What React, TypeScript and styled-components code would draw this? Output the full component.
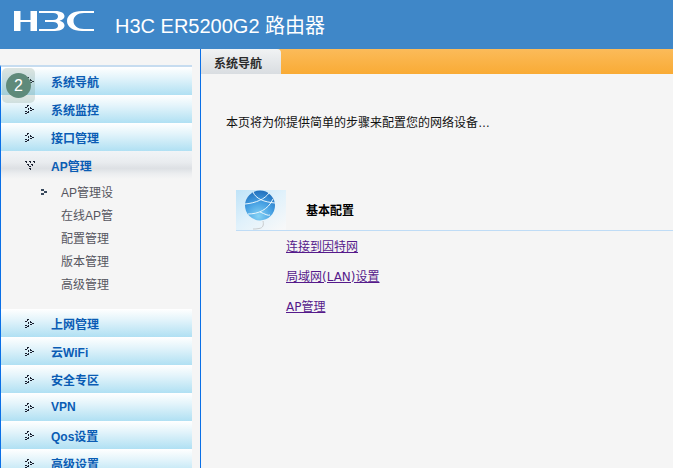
import React from "react";
import styled, { createGlobalStyle } from "styled-components";

const Global = createGlobalStyle`
  html, body { margin: 0; padding: 0; height: 468px; overflow: hidden; background: #f5f5f5; }
  #root { height: 468px; }
  * { box-sizing: border-box; }
`;

const FONT = `"Liberation Sans", "Noto Sans CJK SC", sans-serif`;

const Page = styled.div`
  position: relative;
  width: 673px;
  height: 468px;
  overflow: hidden;
  font-family: ${FONT};
  font-size: 12px;
  display: flex;
  flex-direction: column;
`;
const Header = styled.header`
  height: 49px;
  flex: none;
  background: #3f87c8;
  display: flex;
  align-items: center;
  padding: 0 0 0 14px;
`;
const LogoMark = styled.svg`
  width: 80px;
  height: 20px;
  flex: none;
  margin-bottom: 7px;
`;
const Title = styled.h1`
  margin: 2px 0 0 21px;
  font-size: 20px;
  line-height: 26px;
  font-weight: 400;
  color: #fff;
  white-space: nowrap;
`;
const Body = styled.div`
  flex: 1;
  display: flex;
  min-height: 0;
`;
const Sidebar = styled.nav`
  width: 201px;
  flex: none;
  padding-top: 16px;
  border-right: 1px solid #0a6fe6;
  background: #f5f5f5;
`;
const Menu = styled.div`
  width: 192px;
  height: 500px;
  border-left: 1px solid #0a6fe6;
  border-top: 2px solid #c6dcf0;
`;
const Row = styled.div<{ $open?: boolean }>`
  height: 28px;
  display: flex;
  align-items: center;
  padding-left: 24px;
  font-weight: 700;
  color: #0a5cb4;
  background: ${(p) =>
    p.$open
      ? "linear-gradient(#f1f4f7 0%, #e9ecef 40%, #dde0e4 62%, #eceef0 82%, #f5f5f5 100%)"
      : "linear-gradient(#ffffff 0%, #e6f5fb 35%, #b0e0f3 100%)"};
`;
const RowIcon = styled.svg`
  width: 11px;
  height: 9px;
  flex: none;
  margin-right: 15px;
`;
const Sub = styled.div`
  margin: 1px 0 14px;
`;
const SubRow = styled.div`
  height: 23px;
  display: flex;
  align-items: center;
  padding-left: 40px;
  color: #55555f;
`;
const SubMarker = styled.svg`
  width: 6px;
  height: 6px;
  flex: none;
  margin-right: 14px;
`;
const SubText = styled.span<{ $plain?: boolean }>`
  margin-left: ${(p) => (p.$plain ? "20px" : "0")};
`;
const Main = styled.main`
  flex: 1;
  min-width: 0;
  background: #f5f5f5;
`;
const TabBar = styled.div`
  height: 25px;
  background: linear-gradient(#fbbb5a, #f9ab35);
`;
const Tab = styled.div`
  width: 80px;
  height: 25px;
  padding: 2px 0 0 13px;
  display: flex;
  align-items: center;
  font-weight: 700;
  color: #2a2a2a;
  border-top-right-radius: 4px;
  background: linear-gradient(#f1f3f4, #d9dde1);
`;
const Intro = styled.p`
  margin: 41px 0 0 25px;
  line-height: 16px;
  color: #111;
`;
const SectionHead = styled.div`
  margin: 59px 0 0 35px;
  height: 41px;
  display: flex;
  align-items: center;
  border-bottom: 1px solid #bfdcf6;
`;
const Globe = styled.svg`
  width: 50px;
  height: 40px;
  flex: none;
`;
const SectionTitle = styled.h2`
  margin: 0 0 2px 20px;
  font-size: 12px;
  font-weight: 700;
  color: #000;
`;
const Links = styled.div`
  margin: 8px 0 0 85px;
  display: flex;
  flex-direction: column;
  align-items: flex-start;
`;
const LinkItem = styled.a`
  height: 30px;
  line-height: 16px;
  color: #551a8b;
  text-decoration: underline;
  font-family: "DejaVu Sans", "Noto Sans CJK SC", sans-serif;
`;
const Badge = styled.div`
  position: absolute;
  left: 2px;
  top: 68px;
  width: 33px;
  height: 35px;
  border-radius: 5px;
  background: rgba(110, 140, 125, 0.22);
  display: flex;
  align-items: center;
  justify-content: center;
`;
const BadgeDot = styled.div`
  width: 25px;
  height: 25px;
  border-radius: 50%;
  background: #5f8a7a;
  color: #fff;
  font-size: 16px;
  line-height: 25px;
  text-align: center;
  font-family: "Liberation Sans", sans-serif;
`;

const Logo = () => (
  <LogoMark viewBox="0 0 80 20" aria-label="H3C logo">
    <g fill="#fff">
      <rect x="0" y="0" width="6.5" height="20" />
      <rect x="16.5" y="0" width="6.5" height="20" />
      <rect x="0" y="9" width="23" height="2" />
      <path d="M25 0 H41 C47.5 0 50.5 2.5 50.5 5.2 C50.5 7.4 48.5 9 45.5 9.8 C48.5 10.6 50.5 12.2 50.5 14.6 C50.5 17.5 47.5 20 41 20 H25 V18 H39 C42.5 18 44 16.6 44 14.7 C44 12.6 42.5 10.9 39 10.9 H31 V9 H39 C42.5 9 44 7.4 44 5.3 C44 3.4 42.5 2 39 2 H25 Z" />
      <path d="M80 0 H68 C59 0 53 4 53 10 C53 16 59 20 68 20 H80 V18 H70 C63.5 18 59.5 14.5 59.5 10 C59.5 5.5 63.5 2 70 2 H80 Z" />
    </g>
  </LogoMark>
);

const closedPixels = [
  [2, 0], [3, 0], [2, 1],
  [0, 2], [1, 2], [5, 2], [5, 3], [6, 3],
  [3, 3], [3, 4], [7, 4], [8, 4],
  [5, 5], [6, 5], [0, 6], [1, 6],
  [3, 6], [2, 7], [3, 7], [0, 8], [1, 8],
];
const openPixels = [
  [0, 0], [1, 0], [4, 0], [5, 0], [8, 0], [9, 0], [1, 1], [5, 1], [9, 1],
  [2, 3], [3, 3], [6, 3], [7, 3], [3, 4], [7, 4],
  [4, 5], [5, 5], [4, 7], [5, 7], [5, 8],
];

const Arrow = ({ open }: { open?: boolean }) => (
  <RowIcon viewBox="0 0 11 9">
    {(open ? openPixels : closedPixels).map(([x, y]) => (
      <rect key={`${x}-${y}`} x={x} y={y} width="1" height="1" fill="#1a2030" />
    ))}
  </RowIcon>
);

const GlobeIcon = () => (
  <Globe viewBox="0 0 50 40">
    <defs>
      <linearGradient id="sky" x1="0" y1="0" x2="0.9" y2="1">
        <stop offset="0" stopColor="#bfe3f8" />
        <stop offset="0.5" stopColor="#e0f1fb" />
        <stop offset="1" stopColor="#f7f8f9" />
      </linearGradient>
      <radialGradient id="ball" cx="0.45" cy="0.85" r="0.85">
        <stop offset="0" stopColor="#86d3f5" />
        <stop offset="0.55" stopColor="#459fe2" />
        <stop offset="1" stopColor="#2170bd" />
      </radialGradient>
    </defs>
    <rect width="50" height="40" fill="url(#sky)" />
    <circle cx="24" cy="15.5" r="15" fill="url(#ball)" />
    <g fill="none" stroke="#e8f6fd" strokeWidth="1">
      <path d="M17 2 C20 9 28 12 39 13" />
      <path d="M9 14 C20 13 29 9 33 3" />
      <path d="M12 24 C22 24 32 20 37 9" />
      <path d="M24 22 C29 24 32 26 34 25" />
    </g>
    <path d="M27 31 C28 35 27 38 23 38.5 C21 39 19 39 17 39" fill="none" stroke="#c9ccce" strokeWidth="1" />
  </Globe>
);

const before = ["系统导航", "系统监控", "接口管理"];
const after = ["上网管理", "云WiFi", "安全专区", "VPN", "Qos设置", "高级设置"];
const subs = ["AP管理设", "在线AP管", "配置管理", "版本管理", "高级管理"];
const links = ["连接到因特网", "局域网(LAN)设置", "AP管理"];

export default function App() {
  return (
    <Page>
      <Global />
      <Header>
        <Logo />
        <Title>H3C ER5200G2 路由器</Title>
      </Header>
      <Body>
        <Sidebar>
          <Menu>
            {before.map((t) => (
              <Row key={t}><Arrow />{t}</Row>
            ))}
            <Row $open><Arrow open />AP管理</Row>
            <Sub>
              {subs.map((t, i) => (
                <SubRow key={t}>
                  {i === 0 && (
                    <SubMarker viewBox="0 0 6 6">
                      <path d="M0 0 H3 V2 H6 V4 H3 V6 H0 V4 H3 V2 H0 Z" fill="#3a4a5e" />
                    </SubMarker>
                  )}
                  <SubText $plain={i !== 0}>{t}</SubText>
                </SubRow>
              ))}
            </Sub>
            {after.map((t) => (
              <Row key={t}><Arrow />{t}</Row>
            ))}
          </Menu>
        </Sidebar>
        <Main>
          <TabBar><Tab>系统导航</Tab></TabBar>
          <Intro>本页将为你提供简单的步骤来配置您的网络设备…</Intro>
          <SectionHead>
            <GlobeIcon />
            <SectionTitle>基本配置</SectionTitle>
          </SectionHead>
          <Links>
            {links.map((t) => (
              <LinkItem key={t}>{t}</LinkItem>
            ))}
          </Links>
        </Main>
      </Body>
      <Badge><BadgeDot>2</BadgeDot></Badge>
    </Page>
  );
}
